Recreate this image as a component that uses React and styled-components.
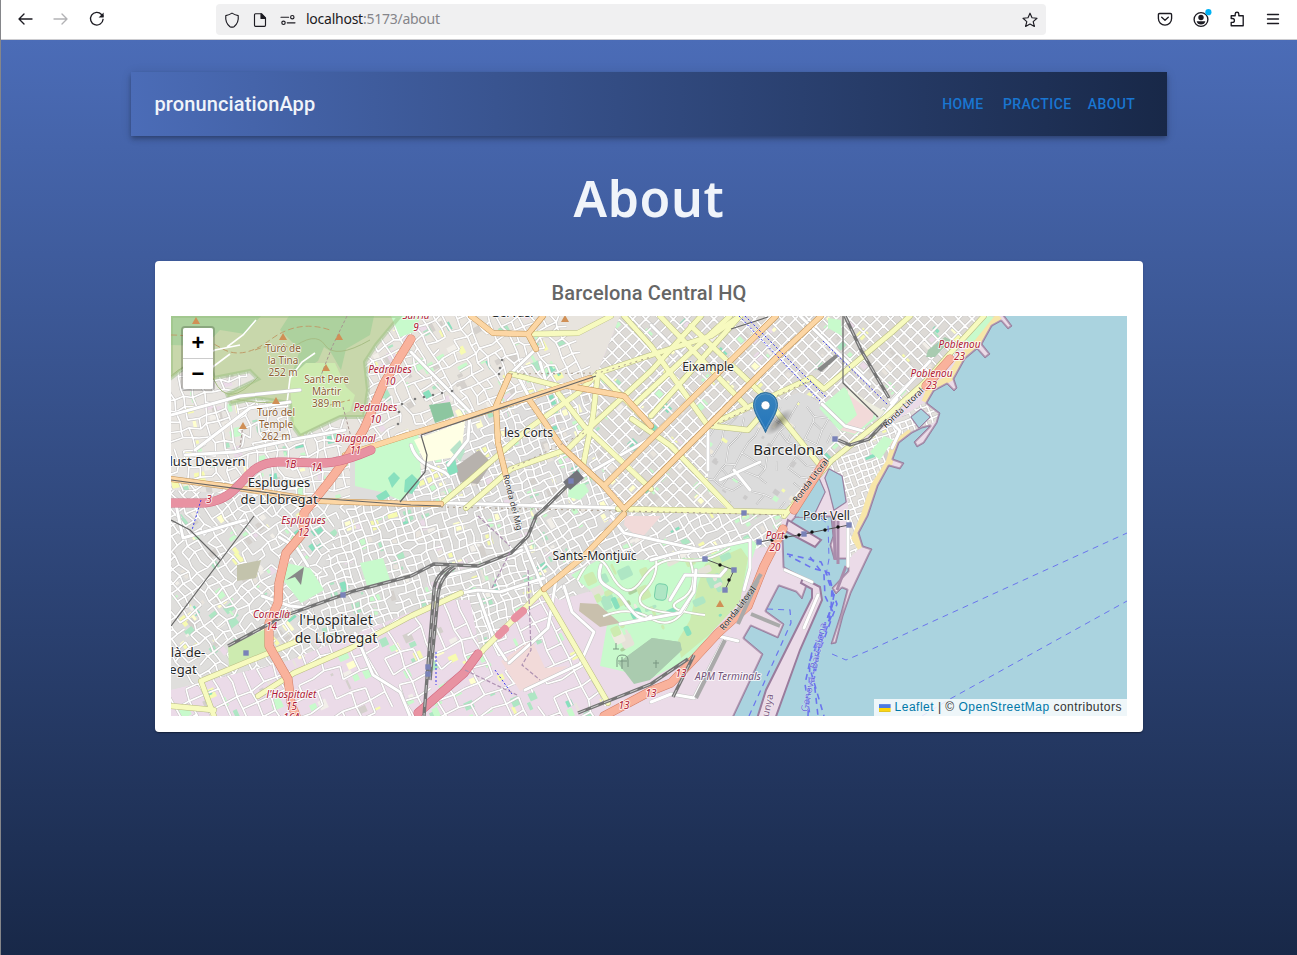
import React from 'react';
import styled, { createGlobalStyle } from 'styled-components';

const GlobalStyle = createGlobalStyle`
  *, *::before, *::after { box-sizing: border-box; }
  html, body { margin: 0; padding: 0; }
  body { font-family: Roboto, "Noto Sans", sans-serif; }
`;

const Window = styled.div`
  width: 100%;
  height: 955px;
  overflow: hidden;
  display: flex;
  flex-direction: column;
  border-left: 1px solid #85868a;
`;

const BrowserBar = styled.div`
  height: 40px;
  flex: none;
  display: flex;
  align-items: flex-start;
  justify-content: space-between;
  padding: 4px 16px 0 16px;
  background: #fff;
  border-bottom: 1px solid #ccccd0;
`;

const IconGroup = styled.div`
  display: flex;
  align-items: center;
  gap: ${(p) => p.$gap}px;
  height: 30px;
`;

const AddressBar = styled.div`
  display: flex;
  align-items: center;
  width: 830px;
  height: 31px;
  margin: 0 0 0 0;
  padding: 0 8px 0 6px;
  gap: 8px;
  background: #f0f0f1;
  border-radius: 4px;
`;

const Url = styled.span`
  flex: 1;
  font: 400 14px/20px "Noto Sans", sans-serif;
  letter-spacing: -0.25px;
  transform: translateY(-1px);
  color: #85858a;
  b { font-weight: 400; color: #1c1b22; }
`;

const Page = styled.main`
  flex: 1;
  display: flex;
  flex-direction: column;
  align-items: center;
  padding: 32px 130px 0;
  background: linear-gradient(to bottom, #4b6cb7, #182848);
`;

const AppBar = styled.header`
  display: flex;
  align-items: center;
  justify-content: space-between;
  width: 1036px;
  height: 64px;
  flex: none;
  padding: 0 23.5px;
  background: linear-gradient(to right, #4b6cb7, #182848);
  box-shadow: 0 2px 4px -1px rgba(0,0,0,.2), 0 4px 5px 0 rgba(0,0,0,.14), 0 1px 10px 0 rgba(0,0,0,.12);
`;

const Brand = styled.div`
  font: 500 20px/32px Roboto, sans-serif;
  letter-spacing: 0.12px;
  color: #f0f4fa;
`;

const Nav = styled.nav` display: flex; `;

const NavButton = styled.a`
  min-width: 64px;
  padding: 6px 8px;
  text-align: center;
  font: 500 14px/24.5px Roboto, sans-serif;
  letter-spacing: 0.4px;
  color: #1976d2;
`;

const Heading = styled.h1`
  margin: 21px 0 0;
  height: 83px;
  font: 600 50px/82px "Noto Sans", sans-serif;
  letter-spacing: 0.6px;
  color: #f0f4fa;
`;

const Card = styled.section`
  display: flex;
  flex-direction: column;
  width: 988px;
  height: 471px;
  margin-top: 21px;
  padding: 16px;
  background: #fff;
  border-radius: 4px;
  box-shadow: 0 2px 1px -1px rgba(0,0,0,.2), 0 1px 1px rgba(0,0,0,.14), 0 1px 3px rgba(0,0,0,.12);
`;

const CardTitle = styled.h2`
  margin: 0;
  height: 39px;
  text-align: center;
  font: 500 20px/32px Roboto, sans-serif;
  letter-spacing: 0.15px;
  color: #666;
`;

const MapFrame = styled.div`
  position: relative;
  height: 400px;
  overflow: hidden;
  svg { display: block; }
`;

const ZoomControl = styled.div`
  position: absolute;
  top: 10px;
  left: 10px;
  width: 34px;
  border: 2px solid rgba(0,0,0,.2);
  border-radius: 4px;
  background-clip: padding-box;
`;

const ZoomButton = styled.button`
  display: block;
  width: 30px;
  height: ${(p) => (p.$last ? 30 : 31)}px;
  padding: 0;
  border: 0;
  border-bottom: ${(p) => (p.$last ? '0' : '1px solid #ccc')};
  border-radius: ${(p) => (p.$last ? '0 0 2px 2px' : '2px 2px 0 0')};
  background: #fff;
  color: #000;
  font: bold 22px/30px "Liberation Sans", sans-serif;
`;

const Attribution = styled.div`
  position: absolute;
  right: 0;
  bottom: 0;
  display: flex;
  align-items: center;
  width: 253px;
  height: 17px;
  padding: 0 5px;
  background: rgba(255,255,255,.8);
  white-space: pre;
  font: 12px/17px "Liberation Sans", sans-serif;
  letter-spacing: 0.49px;
  color: #333;
  a { color: #0078a8; }
  svg { margin-right: 4px; }
`;

/* ---------- map geometry ---------- */

function random(seed) {
  let s = seed;
  return () => {
    s = (s * 16807) % 2147483647;
    return s / 2147483647;
  };
}

function streetNet(seed, box, angle, step, jitter, skip) {
  const r = random(seed);
  const [x0, y0, x1, y1] = box;
  const cx = (x0 + x1) / 2;
  const cy = (y0 + y1) / 2;
  const rad = Math.hypot(x1 - x0, y1 - y0) / 2;
  const n = Math.ceil((rad * 2) / step);
  const a = (angle * Math.PI) / 180;
  const pts = [];
  for (let i = 0; i <= n; i++) {
    pts.push([]);
    for (let j = 0; j <= n; j++) {
      const u = -rad + i * step + (r() - 0.5) * jitter;
      const v = -rad + j * step + (r() - 0.5) * jitter;
      pts[i].push([
        (cx + u * Math.cos(a) - v * Math.sin(a)).toFixed(1),
        (cy + u * Math.sin(a) + v * Math.cos(a)).toFixed(1),
      ]);
    }
  }
  let d = '';
  for (let i = 0; i < n; i++) {
    for (let j = 0; j < n; j++) {
      if (r() > skip) d += `M${pts[i][j]}L${pts[i + 1][j]}`;
      if (r() > skip) d += `M${pts[i][j]}L${pts[i][j + 1]}`;
    }
  }
  return d;
}

const MIX = ['#c8facc', '#ffffcf', '#f2efe9', '#aee6c4', '#e9e4dd', '#d4d0cc', '#f7fbb0', '#c8facc', '#88e0be', '#ebdbe8'];

function blocks(seed, box, angle, count, colors, size) {
  const r = random(seed);
  const out = [];
  for (let i = 0; i < count; i++) {
    const x = box[0] + r() * (box[2] - box[0]);
    const y = box[1] + r() * (box[3] - box[1]);
    out.push({
      x, y,
      w: 2 + r() * size,
      h: 2 + r() * size,
      fill: colors[Math.floor(r() * colors.length)],
      t: `rotate(${angle} ${x.toFixed(1)} ${y.toFixed(1)})`,
    });
  }
  return out;
}

const DISTRICTS = [
  { id: 'west', seed: 77, box: [171, 340, 420, 520], angle: -12, step: 10, jitter: 6, skip: 0.25, n: 190, fill: '#e8e5e1',
    poly: '171,325 400,325 420,340 420,520 171,520' },
  { id: 'sarria', seed: 18, box: [370, 316, 560, 440], angle: -28, step: 9.5, jitter: 5, skip: 0.25, n: 130, fill: '#e8e4de',
    poly: '371,316 620,316 596,376 411,436 340,455 350,390' },
  { id: 'corts', seed: 29, box: [400, 370, 640, 520], angle: -22, step: 8, jitter: 3, skip: 0.18, n: 170, fill: '#dedddc',
    poly: '350,460 596,376 624,512 536,520 350,520' },
  { id: 'eixample', seed: 35, box: [560, 316, 990, 520], angle: 45, step: 9.6, jitter: 0.5, skip: 0.05, n: 240, fill: '#dddad6',
    poly: '620,316 1000,316 890,410 840,450 786,512 624,512 584,430 596,376' },
  { id: 'cornella', seed: 43, box: [171, 510, 440, 650], angle: -38, step: 9, jitter: 4, skip: 0.2, n: 190, fill: '#dfdedc',
    poly: '171,490 430,505 440,600 360,650 171,690' },
  { id: 'hospitalet', seed: 51, box: [290, 510, 560, 640], angle: -18, step: 8, jitter: 3, skip: 0.15, n: 150, fill: '#dddcda',
    poly: '350,500 550,508 544,590 470,660 420,716 330,680 310,600' },
  { id: 'zona', seed: 66, box: [171, 630, 610, 716], angle: -25, step: 15, jitter: 4, skip: 0.28, n: 100, fill: '#ebdbe8',
    poly: '171,690 290,660 440,600 470,600 480,650 544,590 612,716 171,716' },
  { id: 'sants', seed: 12, box: [520, 500, 790, 580], angle: -30, step: 9, jitter: 3, skip: 0.2, n: 90, fill: '#dddcda',
    poly: '530,508 784,512 776,545 700,560 560,600 540,590' },
  { id: 'barceloneta', seed: 21, box: [828, 410, 930, 570], angle: -20, step: 6.5, jitter: 1, skip: 0.12, n: 40, fill: '#e3e0dc',
    poly: '828,462 884,428 925,402 945,415 900,445 889,466 868,516 860,548 848,560 848,500' },
];

const GREENS = [
  ['#c8d7ab', '171,316 400,316 376,345 365,362 368,390 364,417 340,417 300,436 292,425 290,403 256,398 231,404 227,394 258,379 250,371 214,378 205,352 171,378'],
  ['#add19e', '171,316 261,316 245,334 220,330 205,346 171,345'],
  ['#add19e', '289,316 374,316 370,335 346,349 341,370 330,351 324,347 318,361 290,379 300,350 280,330'],
  ['#cdebb0', '290,378 306,363 335,363 346,387 355,395 350,411 323,423 299,435 292,422'],
  ['#c8facc', '391,316 421,316 414,332 400,337'],
  ['#c8facc', '355,454 398,440 418,430 421,475 402,501 381,492 355,486'],
  ['#ffffe5', '414,440 465,421 461,456 425,462'],
  ['#8dc6a0', '429,405 450,402 454,416 435,423'],
  ['#b7b2ad', '455,467 479,450 492,463 478,484 460,482'],
  ['#b9e4ca', '450,450 460,440 465,451 460,462'],
  ['#c8facc', '569,487 584,483 589,491 580,500 568,497'],
  ['#c8facc', '819,408 844,387 877,418 855,435 839,430'],
  ['#f2dad9', '846,387 874,410 873,418 855,434 840,430 857,415'],
  ['#efefe0', '848,387 868,402 889,414 881,419 848,394'],
  ['#c8facc', '828,318 841,320 842,336 828,328'],
  ['#a8cbb0', '928,350 945,337 951,340 935,357 926,357'],
  ['#c8facc', '966,334 988,316 1000,318 980,342 967,347'],
  ['#c8facc', '286,563 310,568 324,590 301,603 283,580'],
  ['#cdebb0', '228,646 268,628 270,650 229,668'],
  ['#c3c3ac', '237,565 261,560 256,578 237,581'],
  ['#c8facc', '360,563 383,558 390,580 367,586'],
  ['#f2dad9', '501,661 532,640 545,668 568,666 550,677 520,691'],
  ['#f2dad9', '625,516 661,516 640,540 624,525'],
  ['#c8facc', '571,575 600,559 650,560 704,558 748,537 757,544 739,598 715,628 694,656 652,678 600,666 607,625 592,592'],
  ['#cdebb0', '705,564 741,548 748,558 740,602 710,634 681,658 678,640 690,620 698,585'],
  ['#c9c0ad', '580,603 598,604 620,623 600,627 579,611'],
  ['#aacbaf', '618,663 652,638 680,642 682,650 650,680 634,684'],
  ['#c8facc', '870,452 884,436 893,440 880,460'],
  ['#88e0be', '446,462 455,458 458,472 448,476'],
  ['#88e0be', '405,480 412,474 420,482 412,494 404,492'],
  ['#88e0be', '388,478 394,472 400,478 392,488'],
  ['#88e0be', '376,496 386,490 390,496 380,502'],
];

const SEA = [
  '1000,310 1012,326 1008,329 1001,321 992,326 982,344 990,354 985,358 977,349 965,359 954,379 957,388 954,391 947,384 934,391 927,403 940,413 937,423 924,443 917,447 914,442 930,426 922,428 912,433 899,443 893,459 904,463 900,469 889,466 878,486 868,516 859,533 863,546 872,549 869,555 851,593 843,616 836,643 831,644 841,613 847,590 842,588 836,594 832,588 848,571 848,559 834,559 830,545 833,536 831,517 797,516 784,530 783,540 784,567 806,579 807,585 802,599 796,592 779,586 766,611 784,624 778,638 751,626 744,638 763,654 731,722 1134,722 1134,310',
  '795,517 806,494 818,476 825,492 813,517',
  '829,469 842,476 846,502 834,510 829,490 825,478',
  '911,417 921,409 930,417 919,428',
];

const PIERS = [
  '756,722 766,690 812,598 812,589 801,583 803,578 820,587 822,600 800,650 774,722',
  '788,520 821,540 815,547 785,531',
];

const ROADS = [
  { c: '#fff', k: '#c4c4c4', w: 3, d: [
    'M195,450 L250,408 290,402', 'M171,415 L240,396 300,390', 'M185,455 L235,452 290,440 345,430',
    'M175,500 L183,538 245,520', 'M279,537 L297,548 308,566', 'M262,596 L290,606 310,608', 'M411,352 L470,412 468,440 448,465',
    'M411,445 C418,470 445,467 449,477', 'M508,376 L535,350', 'M540,362 L548,388', 'M519,378 L529,397', 'M411,502 L624,508', 'M536,516 L562,488 651,438',
    'M440,577 L475,569 522,550', 'M456,594 L478,590 500,592 544,578', 'M478,594 L496,645 506,660', 'M509,663 L548,628 556,580 575,560',
    'M525,545 L542,586', 'M564,586 L572,612 594,632 580,664 525,690', 'M601,565 C593,589 613,584 623,599 S643,625 651,616',
    'M651,560 L680,552 704,550 750,540 750,568 744,590', 'M670,600 L685,575 720,576 726,569', 'M620,624 L680,613 694,592 696,570',
    'M611,516 L624,533 701,550', 'M785,570 L812,582', 'M818,595 L804,628', 'M848,516 L848,566', 'M355,633 L373,675 400,692 410,716',
    'M651,325 L700,374', 'M800,316 L870,384', 'M891,403 L930,361', 'M822,404 L845,426 870,433 897,399', 'M708,426 L708,470',
    'M720,480 L760,462', 'M734,470 L750,490', 'M885,416 L900,431 892,448', 'M718,636 L738,641', 'M724,640 L694,698 671,694 651,702'] },
  { c: '#f7fabf', k: '#b9bc83', w: 4.8, d: [
    'M466,508 L511,469 568,449 584,433 651,371 701,316', 'M441,504 L471,479 528,429 578,393 598,373', 'M598,373 L651,355 711,336 740,316',
    'M598,373 L593,416 583,466', 'M558,393 L584,426 651,489', 'M511,374 L558,386', 'M600,374 L651,426', 'M528,334 L578,333 611,316',
    'M624,316 L651,346 708,426', 'M691,326 L764,396 818,463', 'M632,419 L671,446 731,509', 'M651,416 L740,316',
    'M708,426 L751,406 811,378 824,389 891,333 910,316', 'M712,426 L748,430 764,412', 'M618,509 L784,512',
    'M984,316 L962,340 924,383 887,416 831,461 784,516', 'M544,589 L484,649 465,672', 'M544,593 L608,703',
    'M461,593 L411,616 351,648 294,673 258,696', 'M300,640 L201,681 214,716', 'M171,706 L214,710', 'M660,316 L745,405', 'M635,404 L730,316'] },
  { c: '#fcd6a4', k: '#c29253', w: 5, d: [
    'M345,455 L411,434 471,416 528,398 590,378', 'M171,479 L238,488 321,501 411,504 441,504', 'M471,316 L493,333 528,334 543,316', 'M528,334 L536,349',
    'M509,376 L496,406 498,443 506,476', 'M528,398 L561,446 604,486 624,509', 'M568,386 L624,396 651,426', 'M604,486 L651,439 776,316',
    'M624,509 L651,483 778,356 821,316', 'M624,514 L584,556 544,589'] },
  { c: '#f9b29c', k: '#d27c63', w: 8, d: [
    'M411,339 L384,383 364,429 348,456 328,483 304,513 303,533 286,553 279,583 278,603 269,623 269,646 288,679 291,703 296,716',
    'M824,463 L794,510', 'M783,529 L764,566 748,606 718,633 694,659 671,683 651,691 604,716', 'M950,359 L926,386'] },
  { c: '#e892a2', k: '#d36980', w: 8, d: [
    'M171,503 L205,503 C246,498 240,463 278,462 S325,470 371,450', 'M478,654 L464,673 418,713'] },
];

const RAILS = [
  'M228,646 L284,616 354,591 411,576 434,564 478,566 511,553 528,536 536,516 544,509 574,479', 'M451,566 Q435,575 434,590 L424,716', 'M455,567 Q440,577 438,595 L430,680',
  'M578,713 L651,684 688,659', 'M838,440 L850,445 869,439 887,420', 'M845,316 L861,350 889,398', 'M673,697 L694,655',
];

const TOWNS = [
  ['Eixample', 708, 371, 12.1], ['Barcelona', 788.5, 455, 15], ['les Corts', 528.5, 436.5, 12.1], ['Port Vell', 826.5, 519.5, 12],
  ['Sants-Montjuïc', 594.5, 560, 12], ['Esplugues', 279, 487, 13], ['de Llobregat', 279, 504, 13], ['lust Desvern', 207.5, 466, 13],
  ["l'Hospitalet", 336, 625, 13.9], ['de Llobregat', 336, 643, 13.9], ['là-de-', 188, 657, 13], ['egat', 183, 674, 13], ['Gervasi', 512, 317, 12.2],
];

const PEAKS = [
  ['Turó de', 283, 351.5], ['la Tina', 283, 363.5], ['252 m', 283, 375.5], ['Sant Pere', 326.5, 383], ['Màrtir', 326.5, 395], ['389 m', 326.5, 407],
  ['Turó del', 276, 415.5], ['Temple', 276, 427.5], ['262 m', 276, 439.5],
];

const EXITS = [
  ['Pedralbes', 390, 373], ['10', 390, 385], ['Pedralbes', 375.5, 411], ['10', 375.5, 423], ['Diagonal', 355.5, 442], ['11', 355.5, 454],
  ['1B', 290.5, 467.5], ['1A', 316.5, 471], ['3', 209, 502.5], ['Esplugues', 303.5, 524], ['12', 303.5, 536], ['Cornellà', 271.5, 617.5],
  ['14', 271.5, 629.5], ["l'Hospitalet", 291.5, 698], ['15', 291.5, 710], ['16A', 291.5, 721], ['13', 624, 708.5], ['13', 651, 697], ['13', 681, 676.5],
  ['Port', 775, 538.5], ['20', 775, 550.5], ['Poblenou', 959.5, 347.5], ['23', 959.5, 359.5], ['Poblenou', 931.5, 376.5], ['23', 931.5, 388.5], ['Sarrià', 416, 319], ['9', 416, 331],
];

const PEAK_MARKS = [[196, 321], [283, 337], [339, 337], [326, 368], [276, 401], [243, 426], [565, 319], [720, 604]];
const STATIONS = [[246, 653], [343, 595], [428, 667], [428, 674], [744, 513], [835, 439], [705, 559], [759, 542], [804, 534], [849, 525], [734, 570], [725, 590], [571, 481]];

const Label = styled.text`
  font-family: "Noto Sans", sans-serif;
  font-size: ${(p) => p.$size || 10}px;
  font-style: ${(p) => (p.$italic ? 'italic' : 'normal')};
  fill: ${(p) => p.$color};
  stroke: rgba(255,255,255,.75);
  stroke-width: ${(p) => p.$halo || 2}px;
  stroke-linejoin: round;
  paint-order: stroke;
  text-anchor: middle;
`;

function District({ d }) {
  const clip = `district-${d.id}`;
  const net = streetNet(d.seed, d.box, d.angle, d.step, d.jitter, d.skip);
  return (
    <g>
      <clipPath id={clip}><polygon points={d.poly} /></clipPath>
      <g clipPath={`url(#${clip})`}>
        <polygon points={d.poly} fill={d.fill} />
        {blocks(d.seed + 5, d.box, d.angle, d.n, MIX, 9).map((b, i) => (
          <rect key={i} x={b.x} y={b.y} width={b.w} height={b.h} fill={b.fill} transform={b.t} />
        ))}
        <path d={net} stroke="#c2c0bf" strokeWidth="2.7" fill="none" />
        <path d={net} stroke="#fff" strokeWidth="1.7" fill="none" />
      </g>
    </g>
  );
}

function FerryRoutes() {
  return (
    <g fill="none" stroke="#6b75ee" strokeWidth="1.2" strokeDasharray="6 5">
      <path d="M832,654 L846,660 870,650 1127,533" strokeWidth="1" />
      <path d="M922,716 L950,699 1127,601" strokeWidth="1" />
      <path d="M749,716 L791,623 790,610 767,609" />
      <g strokeWidth="1.6">
        <path d="M787,554 L821,562 832,586 831,610 812,652 805,684 810,716" />
        <path d="M789,556 L812,568 829,573 834,601 822,632 814,680 818,716" strokeDashoffset="4" />
        <path d="M810,557 L824,575 825,596 833,612 819,648 806,706" />
        <path d="M828,580 L837,604 820,650 811,672 824,716" />
        <path d="M835,590 L829,620 810,660 808,716" strokeDashoffset="7" />
        <path d="M821,518 L828,524 829,559 826,575" strokeWidth="1" />
      </g>
    </g>
  );
}

const HILL_ROADS = 'M574,588 Q594,540 610,572 T642,580 T682,560 T730,548 M580,630 Q620,600 650,618 T695,585 M650,540 Q665,570 645,590 T680,614 M690,560 Q700,590 680,600 T705,615';

function CityMap() {
  return (
    <svg width="956" height="400" viewBox="171 316 956 400">
      <defs>
        <linearGradient id="pin" x1="0" y1="0" x2="0" y2="1">
          <stop offset="0" stopColor="#3883bd" /><stop offset="1" stopColor="#2375bb" />
        </linearGradient>
        <radialGradient id="shade"><stop offset="0" stopColor="#000" stopOpacity=".42" /><stop offset="1" stopColor="#000" stopOpacity="0" /></radialGradient>
        <clipPath id="montjuic"><polygon points={GREENS[23][1]} /></clipPath>
        <clipPath id="oldtown"><polygon points="708,428 764,406 800,392 815,398 840,432 818,462 786,509 731,509 708,480" /></clipPath>
      </defs>
      <rect x="171" y="316" width="956" height="400" fill="#ebdbe8" />
      {DISTRICTS.map((d) => <District key={d.id} d={d} />)}
      <g clipPath="url(#oldtown)">
        <rect x="700" y="385" width="150" height="130" fill="#dcdcdc" />
        <path d={streetNet(90, [700, 385, 850, 515], 28, 12, 7, 0.55)} stroke="#b6b6b6" strokeWidth="1.8" fill="none" />
        <path d={streetNet(90, [700, 385, 850, 515], 28, 12, 7, 0.55)} stroke="#f2f2f2" strokeWidth="1" fill="none" />
        {blocks(64, [710, 400, 800, 500], 35, 24, ['#c8facc', '#eee9dc', '#f6fbb0', '#cbcaca'], 5).map((b, i) => <rect key={i} x={b.x} y={b.y} width={b.w} height={b.h} fill={b.fill} transform={b.t} />)}
      </g>
      {GREENS.map(([fill, points], i) => <polygon key={i} points={points} fill={fill} />)}
      <polygon points={GREENS[0][1]} fill="none" stroke="#94bd7d" strokeOpacity=".45" strokeWidth="4" />
      <g clipPath="url(#montjuic)">
        {blocks(99, [570, 540, 720, 650], -25, 70, ['#88e0be', '#aee6c4', '#eeeae0', '#cdebb0', '#add19e', '#e5e2d8'], 12).map((b, i) => <rect key={i} x={b.x} y={b.y} width={b.w} height={b.h} rx="2" fill={b.fill} transform={b.t} />)}
        <path d={HILL_ROADS} stroke="#c0c9b5" strokeWidth="3.2" fill="none" />
        <path d={HILL_ROADS} stroke="#fff" strokeWidth="2" fill="none" />
        <rect x="655" y="584" width="12" height="16" rx="4" fill="#aee6c4" stroke="#76cfa8" transform="rotate(8 661 592)" />
        <polygon points={GREENS[26][1]} fill="#aacbaf" />
      </g>
      <g fill="none" stroke="#a7bd84" strokeWidth="1">
        <path d="M171,376 Q200,350 214,380 T258,377 M227,397 Q255,405 292,402 M290,350 Q315,330 325,345 T370,340" />
        <path d="M171,335 Q200,335 221,348 T270,340 T330,330 M255,350 Q280,340 300,352 M330,405 L350,400" stroke="#bf9d6a" strokeDasharray="6 3" />
        <path d="M347,316 L332,347 320,378 M343,407 L351,437 M243,425 L239,455" stroke="#a79692" strokeDasharray="3 2" />
      </g>
      <g stroke="#fff" fill="none" strokeWidth="1.6">
        <path d="M256,320 L243,335 227,347 M185,365 L215,350 240,345 M210,369 L230,354 M287,403 L290,378 302,362 315,353" />
      </g>
      <g fill="none" stroke="#f7e6a9" strokeWidth="7">
        <path d="M999,316 L978,342 962,357 950,378 930,389 925,402 M911,432 L895,444 889,463 874,486 864,516 855,538 861,548" />
      </g>
      {SEA.map((points, i) => (
        <g key={i} strokeLinejoin="round">
          <polygon points={points} fill="#aad3df" stroke="#b39ab3" strokeWidth={i ? 1.6 : 3} />
          <polygon points={points} fill="#aad3df" stroke="#8d6c91" strokeWidth=".7" />
        </g>
      ))}
      <path d="M799,517 H811 L814,512 803,508Z" fill="#aad3df" />
      {PIERS.map((points) => <polygon key={points} points={points} fill="#ebdbe8" stroke="#9a7c9d" strokeWidth="2" />)}
      <path d="M834,518 L835,560 M838,521 L838,564 M837,590 L846,566" stroke="#aa8cab" strokeWidth="3" />
      {ROADS.map((g) => (
        <g key={g.c} fill="none" strokeLinejoin="round" strokeLinecap="round">
          {g.d.map((d) => <path key={d} d={d} stroke={g.k} strokeWidth={g.w + 1} />)}
          {g.d.map((d) => <path key={d + 'fill'} d={d} stroke={g.c} strokeWidth={g.w} />)}
        </g>
      ))}
      <path d="M499,635 L505,629 M515,618 L523,611" stroke="#e892a2" strokeWidth="8" strokeLinecap="round" />
      <g fill="none">
        <path d="M441,507 L624,511 784,515 M511,374 L598,373 651,357 M584,433 L511,469 M712,426 L811,380" stroke="#aa9c8c" strokeWidth="1" strokeDasharray="2 4" />
        {RAILS.map((d) => <path key={d} d={d} stroke="#747474" strokeWidth="3.4" />)}
        {RAILS.map((d) => <path key={d + 'dash'} d={d} stroke="#c9c9c9" strokeWidth="1" strokeDasharray="8 6" />)}
        <path d="M254,516 L171,626 M171,520 L190,530 220,560 M421,435 L427,455 425,472 400,502 M421,435 L596,376 M731,329 L768,317 M843,316 V383 L878,417 M171,480 L300,497 411,505 441,506" stroke="#666" strokeWidth="1.2" />
        <path d="M761,574 L735,615 M758,580 L738,624 M751,614 L780,626 M725,640 L696,698" stroke="#aaa" strokeWidth="4" />
        <path d="M739,316 L820,401 M745,316 L827,398 M823,341 L888,405 M201,500 L192,530 M495,670 L512,694 M436,652 V685" stroke="#3838ef" strokeWidth="1" strokeDasharray="2 2" />
        <path d="M465,670 L517,695 M528,570 L531,650 522,665 540,680 M478,516 L510,546 M492,588 L510,552" stroke="#ad91b1" strokeWidth="1.2" strokeDasharray="4 2" />
        <path d="M705,559 L734,570 725,590 M759,542 L804,534 849,525" stroke="#555" strokeWidth="1" />
      </g>
      <polygon points="563,482 577,470 584,478 570,490" fill="#73747b" />
      <path d="M286,580 L304,567 301,585 295,577 Z M817,369 L836,354 838,357 821,372 Z" fill="#888" />
      <FerryRoutes />
      {[[720, 565], [729, 580], [772, 540], [786, 537], [799, 535], [812, 532], [825, 530], [838, 527]].map(([x, y]) => <circle key={x} cx={x} cy={y} r="1.7" fill="#111" />)}
      {STATIONS.map(([x, y]) => <rect key={`${x}-${y}`} x={x - 2.7} y={y - 2.7} width="5.4" height="5.4" fill="#7982b8" />)}
      {[[415, 399], [424, 397], [433, 395], [442, 393], [452, 391], [499, 374], [500, 368], [502, 360], [402, 404], [399, 412], [398, 424]].map(([x, y]) => <circle key={`${x}-${y}`} cx={x} cy={y} r="1.3" fill="#787878" />)}
      {PEAK_MARKS.map(([x, y]) => <path key={x} d={`M${x - 4},${y + 3} L${x},${y - 4} L${x + 4},${y + 3}Z`} fill="#d08f55" />)}
      <path d="M617,667 V660 Q617,655 622,655 Q628,655 628,660 V667 M622,669 V657 M618,661 H627 M656,668 V660 M653,663 H659 M616,649 V643 M613,649 H619" stroke="#789681" fill="none" />
      {PEAKS.map(([t, x, y]) => <Label key={t} x={x} y={y} $color="#8b5d32" $halo={1.6}>{t}</Label>)}
      {EXITS.map(([t, x, y]) => <Label key={`${t}${x}${y}`} x={x} y={y} $italic $color="#b01a35">{t}</Label>)}
      {TOWNS.map(([t, x, y, s]) => <Label key={`${t}${x}`} x={x} y={y} $size={s} $color="#282828">{t}</Label>)}
      <Label x="728" y="680" $italic $size="10.1" $color="#725279">APM Terminals</Label>
      <Label transform="translate(510 503) rotate(76)" $size="8.5" $halo={1} $color="#333">Ronda del Mig</Label>
      <Label transform="translate(813 482) rotate(-53)" $size="8.5" $halo={1} $color="#222">Ronda Litoral</Label>
      <Label transform="translate(740 610) rotate(-52)" $size="8.5" $halo={0.7} $color="#222">Ronda Litoral</Label>
      <Label transform="translate(905 410) rotate(-44)" $size="8.5" $halo={1} $color="#222">Ronda Litoral</Label>
      <Label transform="translate(817 668) rotate(-78)" $size="10" $halo={0.5} $color="#686fd7">Genova - Barcelona</Label>
      <Label transform="translate(771 706) rotate(-78)" $size="10" $halo={1} $color="#7a5680">unya</Label>
      <ellipse cx="779" cy="422" rx="18" ry="7" fill="url(#shade)" transform="rotate(-43 779 422)" />
      <path d="M765.5,432.5 C763,425 753.5,414 753.5,404.5 A12,12 0 1 1 777.5,404.5 C777.5,414 768,425 765.5,432.5Z" fill="url(#pin)" stroke="#2e6c97" />
      <path d="M765.5,429 C762,421 754.7,412 754.7,404.5 A10.8,10.8 0 0 1 776.3,404.5 C776.3,412 769,421 765.5,429Z" fill="none" stroke="#fff" strokeOpacity=".18" />
      <circle cx="765.5" cy="405.3" r="4.4" fill="#fff" stroke="#2e6c97" strokeWidth=".5" />
    </svg>
  );
}

/* ---------- browser icons ---------- */

const ICONS = {
  back: <path d="M15 8H2M7 3 2 8l5 5" />,
  forward: <path d="M1 8h13M9 3l5 5-5 5" />,
  reload: <><path d="M14.1 8.3A6.3 6.3 0 1 1 12.5 3.5L14 5" /><path d="M14.6 1.4v5H9.6z" fill="currentColor" stroke="none" /></>,
  shield: <path d="M8 1.1c2 1.4 4 2.1 6.2 2.5.5 4.5-1.2 8.8-4.2 11.1q-2 .9-4 0C3 12.4 1.3 8.1 1.8 3.6 4 3.2 6 2.5 8 1.1Z" />,
  page: <><path d="M3.5 1.7h6L13.5 6v7.3a1 1 0 0 1-1 1h-9a1 1 0 0 1-1-1V2.7a1 1 0 0 1 1-1Z" /><path d="M9 1.8v4.7h4.5Z" fill="currentColor" /></>,
  tune: <><path d="M1 5.2h7.6M7.2 10.8h7.8" /><circle cx="12.3" cy="5.2" r="1.7" /><circle cx="3.5" cy="10.8" r="1.7" /></>,
  star: <path d="m8 1.2 2 4.6 5 .5-3.8 3.3 1.2 4.9L8 12l-4.4 2.5 1.2-4.9L1 6.3l5-.5Z" />,
  pocket: <><path d="M2.6 2.5h10.8a1.2 1.2 0 0 1 1.2 1.2v3.8a6.6 6.6 0 0 1-13.2 0V3.7a1.2 1.2 0 0 1 1.2-1.2Z" /><path d="m4.7 6.3 3.3 3 3.3-3" /></>,
  account: <><circle cx="8" cy="8.5" r="6.9" /><circle cx="8" cy="6.5" r="2.7" fill="currentColor" stroke="none" /><path d="M3.7 10.2h8.6c-.2 2-2 3.3-4.3 3.3s-4.1-1.3-4.3-3.3Z" fill="currentColor" stroke="none" /><circle cx="15.4" cy="1.2" r="3.1" fill="#00b3f4" stroke="none" /></>,
  puzzle: <path d="M2.2 6V4.7h4V3a1.8 1.8 0 0 1 3.6 0v1.7h4.4v10H2.2v-3.4h1.3a1.9 1.9 0 0 0 0-3.8H2.2Z" />,
  menu: <path d="M2.5 3.5h11M2.5 8h11M2.5 12.5h11" />,
};

const IconSvg = styled.svg`
  width: 16px;
  height: 16px;
  flex: none;
  overflow: visible;
  color: ${(p) => (p.$muted ? '#b2b2b5' : '#1c1b22')};
  fill: none;
  stroke: currentColor;
  stroke-width: ${(p) => (p.$thin ? 1.15 : 1.35)};
  stroke-linecap: round;
  stroke-linejoin: round;
`;

const SiteIcons = styled.div`
  display: flex;
  gap: 12px;
  margin: 0 2px;
`;

const Icon = ({ name, muted, thin }) => <IconSvg viewBox="0 0 16 16" $muted={muted} $thin={thin}>{ICONS[name]}</IconSvg>;

export default function App() {
  return (
    <>
      <GlobalStyle />
      <Window>
        <BrowserBar>
          <IconGroup $gap={20}>
            <Icon name="back" /><Icon name="forward" muted /><Icon name="reload" />
          </IconGroup>
          <AddressBar>
            <SiteIcons><Icon name="shield" thin /><Icon name="page" thin /><Icon name="tune" thin /></SiteIcons>
            <Url><b>localhost</b>:5173/about</Url>
            <Icon name="star" thin />
          </AddressBar>
          <IconGroup $gap={20}>
            <Icon name="pocket" /><Icon name="account" /><Icon name="puzzle" /><Icon name="menu" />
          </IconGroup>
        </BrowserBar>
        <Page>
          <AppBar>
            <Brand>pronunciationApp</Brand>
            <Nav><NavButton>HOME</NavButton><NavButton>PRACTICE</NavButton><NavButton>ABOUT</NavButton></Nav>
          </AppBar>
          <Heading>About</Heading>
          <Card>
            <CardTitle>Barcelona Central HQ</CardTitle>
            <MapFrame>
              <CityMap />
              <ZoomControl><ZoomButton>+</ZoomButton><ZoomButton $last>−</ZoomButton></ZoomControl>
              <Attribution>
                <svg width="12" height="8" viewBox="0 0 12 8"><path fill="#4c7be1" d="M0 0h12v4H0z" /><path fill="#ffd500" d="M0 4h12v3H0z" /><path fill="#e0bc00" d="M0 7h12v1H0z" /></svg>
                <a>Leaflet</a> | © <a>OpenStreetMap</a> contributors
              </Attribution>
            </MapFrame>
          </Card>
        </Page>
      </Window>
    </>
  );
}
